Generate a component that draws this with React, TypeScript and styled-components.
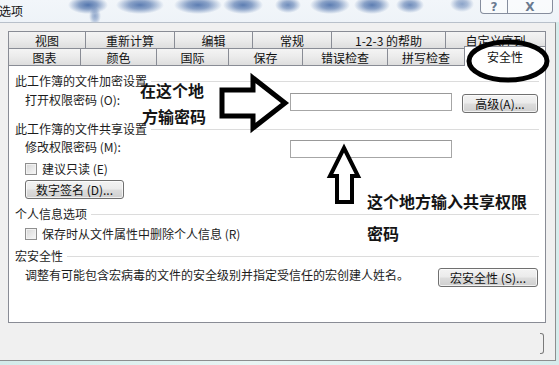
import React from "react";
import styled, { createGlobalStyle } from "styled-components";

const GlobalStyle = createGlobalStyle`
  html, body { margin: 0; padding: 0; }
  body {
    width: 559px;
    height: 365px;
    overflow: hidden;
    background: #d9ecea;
    font-family: "Noto Sans CJK SC", "Noto Sans", sans-serif;
  }
`;

const Page = styled.div`
  position: relative;
  width: 559px;
  height: 365px;
  overflow: hidden;
  display: flex;
  flex-direction: column;
  background: linear-gradient(90deg, #d3ebea 0%, #e9f4f3 45%, #d6ecec 100%);
`;

const blob = (x: number, y: number, rx: number, ry: number, a: number) =>
  `radial-gradient(ellipse ${rx}px ${ry}px at ${x}px ${y}px, rgba(55, 95, 160, ${a}) 0%, rgba(55, 95, 160, ${(a * 0.7).toFixed(2)}) 45%, rgba(55, 95, 160, 0) 100%)`;

const TitleBar = styled.div`
  flex: none;
  height: 22px;
  display: flex;
  align-items: flex-start;
  background:
    ${blob(88, 5, 20, 9, 0.85)},
    ${blob(95, 16, 6, 9, 0.5)},
    ${blob(140, 5, 24, 9, 0.8)},
    ${blob(198, 5, 24, 9, 0.8)},
    ${blob(243, 5, 20, 9, 0.8)},
    ${blob(288, 5, 13, 8, 0.7)},
    ${blob(330, 5, 20, 9, 0.8)},
    ${blob(372, 5, 18, 9, 0.8)},
    ${blob(410, 5, 14, 8, 0.7)},
    ${blob(462, 4, 12, 8, 0.55)},
    linear-gradient(180deg, #f2f6fa 0%, #eef3f8 100%);
`;

const TitleText = styled.div`
  margin-left: -1px;
  padding-top: 4px;
  font-size: 12px;
  line-height: 14px;
  color: #111;
`;

const CaptionGroup = styled.div`
  margin-left: auto;
  margin-right: 6px;
  margin-top: -1px;
  display: flex;
`;

const CaptionButton = styled.div<{ $w: number; $side: "left" | "right" }>`
  width: ${(p) => p.$w}px;
  height: 15px;
  box-sizing: border-box;
  display: flex;
  align-items: center;
  justify-content: center;
  border: 1px solid rgba(95, 105, 125, 0.75);
  border-left-width: ${(p) => (p.$side === "right" ? 0 : 1)}px;
  border-radius: ${(p) => (p.$side === "left" ? "0 0 0 4px" : "0 0 4px 0")};
  background: rgba(255, 255, 255, 0.55);
  color: #6a7a90;
  font-family: "DejaVu Sans", sans-serif;
  font-size: 12px;
  font-weight: 700;
  line-height: 12px;
`;

const Client = styled.div`
  flex: none;
  width: 556px;
  height: 339px;
  box-sizing: border-box;
  background: #f0f0f0;
  border-top: 1px solid #b8c0ca;
  border-right: 1px solid #8d8e8f;
  border-bottom: 1px solid #8d8e8f;
  padding: 8px 0 0 8px;
  display: flex;
  flex-direction: column;
`;

const TabRow = styled.div`
  display: flex;
  height: 17px;
  flex: none;
`;

const Tab = styled.div<{ $w: number; $active?: boolean }>`
  position: relative;
  width: ${(p) => p.$w}px;
  box-sizing: border-box;
  height: ${(p) => (p.$active ? 20 : 17)}px;
  margin-top: ${(p) => (p.$active ? -2 : 0)}px;
  z-index: ${(p) => (p.$active ? 2 : 1)};
  display: flex;
  align-items: center;
  justify-content: center;
  border-left: 1px solid #898c95;
  border-top: 1px solid #898c95;
  background: ${(p) =>
    p.$active ? "#ffffff" : "linear-gradient(180deg, #f4f4f4 0%, #ebebeb 50%, #dedede 100%)"};
  font-size: 12px;
  line-height: 14px;
  color: #111;
  padding-top: ${(p) => (p.$active ? 0 : 1)}px;
  &:last-child {
    border-right: 1px solid #898c95;
  }
`;

const Panel = styled.div`
  flex: none;
  width: 538px;
  height: 258px;
  box-sizing: border-box;
  border: 1px solid #898c95;
  background: #ffffff;
  padding: 0 7px 0 6px;
  display: flex;
  flex-direction: column;
  font-size: 12px;
  color: #1c1c1c;
`;

const GroupHeader = styled.div<{ $mt: number }>`
  display: flex;
  align-items: center;
  height: 16px;
  margin-top: ${(p) => p.$mt}px;
  line-height: 14px;
  white-space: nowrap;
  &::after {
    content: "";
    flex: 1;
    height: 1px;
    margin-left: 4px;
    margin-right: -1px;
    background: #dcdcdc;
  }
`;

const FieldRow = styled.div<{ $mt: number; $h: number }>`
  display: flex;
  align-items: flex-start;
  height: ${(p) => p.$h}px;
  margin-top: ${(p) => p.$mt}px;
  padding-left: 10px;
`;

const FieldLabel = styled.div`
  width: 265px;
  flex: none;
  line-height: 14px;
  white-space: nowrap;
`;

const TextBox = styled.div`
  width: 162px;
  height: 18px;
  box-sizing: border-box;
  border: 1px solid #a6a6a6;
  border-top-color: #999999;
  background: #fff;
`;

const PushButton = styled.div<{ $w: number; $ml?: number; $mt?: number }>`
  width: ${(p) => p.$w}px;
  height: 19px;
  margin-left: ${(p) => p.$ml ?? 0}px;
  margin-top: ${(p) => p.$mt ?? 0}px;
  box-sizing: border-box;
  flex: none;
  display: flex;
  align-items: center;
  justify-content: center;
  border: 1px solid #707070;
  border-radius: 3px;
  background: linear-gradient(180deg, #f3f3f3 0%, #ebebeb 48%, #dddddd 52%, #cfcfcf 100%);
  box-shadow: inset 0 0 0 1px rgba(255, 255, 255, 0.7);
  font-size: 12px;
  line-height: 14px;
  color: #111;
  white-space: nowrap;
`;

const CheckRow = styled.div<{ $mt: number }>`
  display: flex;
  align-items: center;
  gap: 5px;
  height: 16px;
  margin-top: ${(p) => p.$mt}px;
  padding-left: 10px;
  line-height: 14px;
  white-space: nowrap;
`;

const CheckBox = styled.span`
  width: 12px;
  height: 12px;
  flex: none;
  box-sizing: border-box;
  border: 1px solid #8f8f8f;
  background: linear-gradient(135deg, #d6d6d6 0%, #eeeeee 70%, #f8f8f8 100%);
  box-shadow: inset 0 0 0 1px #f2f2f2;
`;

const SpreadRow = styled.div<{ $mt: number }>`
  display: flex;
  justify-content: space-between;
  align-items: flex-start;
  height: 19px;
  margin-top: ${(p) => p.$mt}px;
  padding-left: 10px;
`;

const Description = styled.div`
  line-height: 14px;
  white-space: nowrap;
`;

const Footer = styled.div`
  flex: 1;
  display: flex;
  justify-content: flex-end;
  align-items: flex-start;
  padding: 10px 11px 0 0;
`;

const ButtonEdge = styled.div`
  width: 4px;
  height: 21px;
  box-sizing: border-box;
  border: 1px solid #7a7a7a;
  border-left: none;
  border-radius: 0 3px 3px 0;
`;

const Overlay = styled.svg`
  position: absolute;
  left: 0;
  top: 0;
  width: 559px;
  height: 365px;
  pointer-events: none;
  z-index: 5;
`;

const Annotation = styled.div<{ $x: number; $y: number }>`
  position: absolute;
  left: ${(p) => p.$x}px;
  top: ${(p) => p.$y}px;
  z-index: 6;
  font-family: "Noto Sans CJK SC", sans-serif;
  font-weight: 700;
  font-size: 16px;
  line-height: 18px;
  color: #141414;
  white-space: nowrap;
`;

const row1 = [
  { label: "视图", w: 77 },
  { label: "重新计算", w: 89 },
  { label: "编辑", w: 78 },
  { label: "常规", w: 79 },
  { label: "1-2-3 的帮助", w: 114 },
  { label: "自定义序列", w: 101 },
];

const row2 = [
  { label: "图表", w: 72 },
  { label: "颜色", w: 76 },
  { label: "国际", w: 72 },
  { label: "保存", w: 74 },
  { label: "错误检查", w: 85 },
  { label: "拼写检查", w: 77 },
  { label: "安全性", w: 82, active: true },
];

export default function App() {
  return (
    <>
      <GlobalStyle />
      <Page>
        <TitleBar>
          <TitleText>选项</TitleText>
          <CaptionGroup>
            <CaptionButton $w={28} $side="left">?</CaptionButton>
            <CaptionButton $w={45} $side="right">X</CaptionButton>
          </CaptionGroup>
        </TitleBar>
        <Client>
          <TabRow>
            {row1.map((t) => (
              <Tab key={t.label} $w={t.w}>
                {t.label}
              </Tab>
            ))}
          </TabRow>
          <TabRow>
            {row2.map((t) => (
              <Tab key={t.label} $w={t.w} $active={t.active}>
                {t.label}
              </Tab>
            ))}
          </TabRow>
          <Panel>
            <GroupHeader $mt={7}>此工作簿的文件加密设置</GroupHeader>
            <FieldRow $mt={4} $h={19}>
              <FieldLabel>打开权限密码 (O):</FieldLabel>
              <TextBox />
              <PushButton $w={76} $ml={10} $mt={1}>
                高级(A)...
              </PushButton>
            </FieldRow>
            <GroupHeader $mt={9}>此工作簿的文件共享设置</GroupHeader>
            <FieldRow $mt={3} $h={18}>
              <FieldLabel>修改权限密码 (M):</FieldLabel>
              <TextBox />
            </FieldRow>
            <CheckRow $mt={3}>
              <CheckBox />
              建议只读 (E)
            </CheckRow>
            <FieldRow $mt={3} $h={18}>
              <PushButton $w={99}>数字签名 (D)...</PushButton>
            </FieldRow>
            <GroupHeader $mt={8}>个人信息选项</GroupHeader>
            <CheckRow $mt={4}>
              <CheckBox />
              保存时从文件属性中删除个人信息 (R)
            </CheckRow>
            <GroupHeader $mt={6}>宏安全性</GroupHeader>
            <SpreadRow $mt={4}>
              <Description>调整有可能包含宏病毒的文件的安全级别并指定受信任的宏创建人姓名。</Description>
              <PushButton $w={100}>宏安全性 (S)...</PushButton>
            </SpreadRow>
          </Panel>
          <Footer>
            <ButtonEdge />
          </Footer>
        </Client>

        <Overlay viewBox="0 0 559 365">
          <polygon
            points="222,90 253,90 253,78 285,103 253,128 253,116 222,116"
            fill="#ffffff"
            stroke="#000"
            strokeWidth={5}
            strokeLinejoin="miter"
          />
          <polygon
            points="344,148 358,176 352,176 352,202 337,202 337,176 330,176"
            fill="#ffffff"
            stroke="#000"
            strokeWidth={4}
            strokeLinejoin="miter"
          />
          <ellipse cx={508} cy={61} rx={39} ry={19} fill="none" stroke="#000" strokeWidth={5} />
        </Overlay>
        <Annotation $x={140} $y={81}>在这个地</Annotation>
        <Annotation $x={142} $y={107}>方输密码</Annotation>
        <Annotation $x={367} $y={192}>这个地方输入共享权限</Annotation>
        <Annotation $x={367} $y={224}>密码</Annotation>
      </Page>
    </>
  );
}
